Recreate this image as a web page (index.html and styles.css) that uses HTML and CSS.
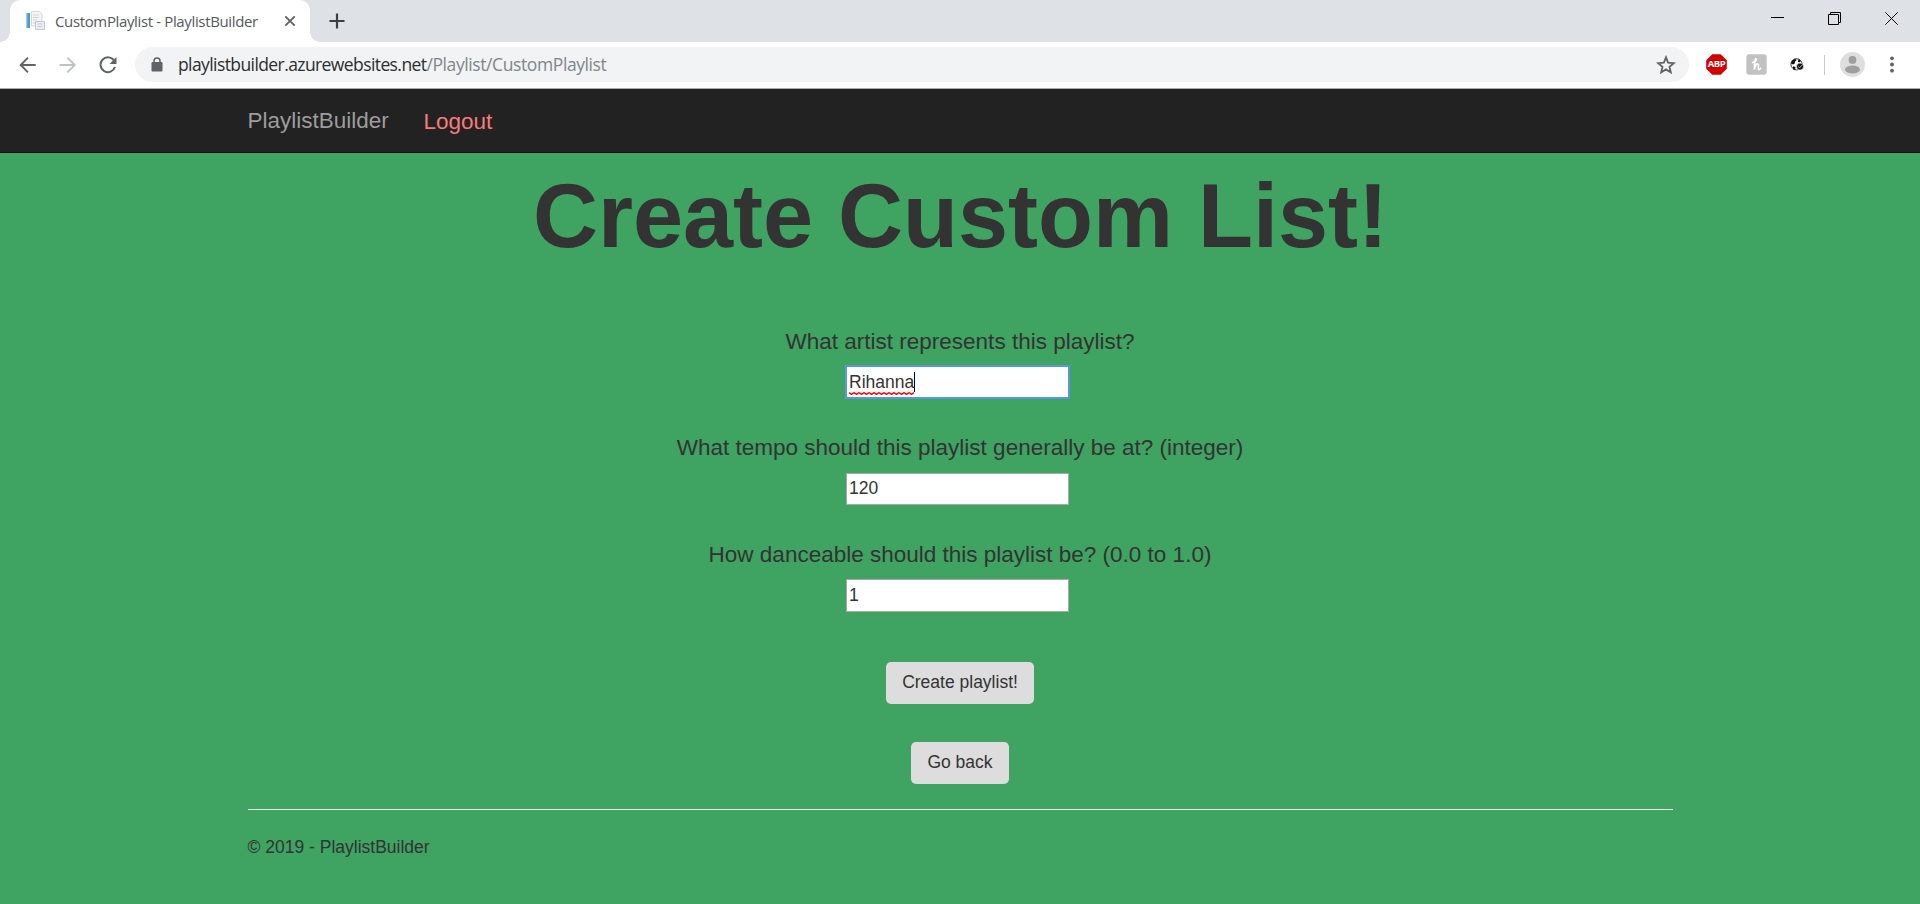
FILE: index.html
```html
<!DOCTYPE html>
<html lang="en">
<head>
<meta charset="utf-8">
<title>CustomPlaylist - PlaylistBuilder</title>
<link rel="stylesheet" href="styles.css">
</head>
<body>
<div class="tabstrip">
  <div class="tab">
    <svg class="favicon" width="20" height="20" viewBox="0 0 20 20"><path d="M1 2h4v15H1z" fill="#4a9bd0"/><path d="M1 2h1.300v15H1z" fill="#9dcbea"/><path d="M6.500.5h8l2.500 2.500v12H6.500z" fill="#f4f5f8" stroke="#d6d8df"/><path d="M8 4h6M8 6.500h6M8 9h4M8 12h3" stroke="#d0d4dc"/><path d="M10.500 10.500h9v8h-9z" fill="#eceef3" stroke="#c3c6d0"/><path d="M12.500 13h5M12.500 15.500h5" stroke="#c3c7d2"/></svg>
    <span class="tabtitle">CustomPlaylist - PlaylistBuilder</span>
    <svg class="tabclose" width="12" height="12" viewBox="0 0 12 12"><path d="M1.300 1.300l9.400 9.400M10.700 1.300l-9.400 9.400" stroke="#5f6368" stroke-width="1.900"/></svg>
  </div>
  <svg class="newtab" width="16" height="16" viewBox="0 0 16 16"><path d="M8 .5v15M.5 8h15" stroke="#3c4043" stroke-width="2.200"/></svg>
  <div class="window">
    <svg width="13" height="13" viewBox="0 0 13 13"><path d="M0 5.500h13" stroke="#000"/></svg>
    <svg width="13" height="13" viewBox="0 0 13 13"><path d="M.5 2.500h10v10H.5zM2.500 2.500v-2h10v10h-2" fill="none" stroke="#000"/></svg>
    <svg width="13" height="13" viewBox="0 0 13 13"><path d="M.3.3l12.400 12.400M12.700.3L.3 12.700" stroke="#000"/></svg>
  </div>
</div>
<div class="toolbar">
  <svg class="back" width="18" height="18" viewBox="0 0 18 18"><path d="M16.700 9H2M9 1.700L1.700 9 9 16.300" fill="none" stroke="#5f6368" stroke-width="1.900"/></svg>
  <svg class="forward" width="18" height="18" viewBox="0 0 18 18"><path d="M.7 9h15M8.400 1.700L15.700 9l-7.300 7.300" fill="none" stroke="#bdc1c6" stroke-width="1.900"/></svg>
  <svg class="reload" width="18" height="18" viewBox="0 0 18 18"><path d="M15 4.500A7.400 7.400 0 1 0 16 11" fill="none" stroke="#5f6368" stroke-width="2"/><path d="M17.500 1v7h-7z" fill="#5f6368"/></svg>
  <div class="omnibox">
    <svg width="12" height="15" viewBox="0 0 12 15"><path d="M3 6V4a3 3 0 0 1 6 0v2" fill="none" stroke="#5f6368" stroke-width="1.500"/><rect x=".5" y="5" width="11" height="9.500" rx="1.200" fill="#5f6368"/></svg>
    <span class="url">playlistbuilder.azurewebsites.net<span class="path">/Playlist/CustomPlaylist</span></span>
    <svg class="star" width="20" height="20" viewBox="0 0 20 20"><path d="M10 2.300l2.100 5.300 5.700.5-4.300 3.700 1.300 5.600L10 14.400l-4.800 3 1.300-5.600-4.300-3.700 5.700-.5z" fill="none" stroke="#5f6368" stroke-width="1.800"/></svg>
  </div>
  <div class="abp">
    <svg width="21" height="21" viewBox="0 0 21 21"><path d="M6.300.2h8.400l6.100 6.100v8.400l-6.100 6.100H6.300L.2 14.700V6.300z" fill="#d00000"/></svg>
    <span class="abptext">ABP</span>
  </div>
  <svg class="honey" width="21" height="21" viewBox="0 0 21 21"><rect x=".3" y=".3" width="20.400" height="20.400" rx="3" fill="#c2c2c2"/><path d="M6.500 8.500C9 8 11 6 10.300 4.900 9.300 4 8.500 7.500 8.300 15.500 8.800 12 10.400 9.500 12 10c1.600.7-.7 4.500.4 5.400.7.500 1.600-.2 2.100-1.200" fill="none" stroke="#fff" stroke-width="1.700" stroke-linecap="round"/></svg>
  <svg class="globe" width="14" height="14" viewBox="0 0 14 14"><circle cx="6.500" cy="6.300" r="5.600" fill="#fff" stroke="#333" stroke-width="1"/><path d="M2 2.500L5.500.8 6.600 2.200 5 3.600 4.800 5.500 3 6.500 1 5.500zM8.500 1L11 2.800l-1.500 1.700-1.700-.7zM3 8.300l2.600.6-.6 3-2-.6z" fill="#111"/><circle cx="10" cy="8.600" r="3.500" fill="#111" stroke="#fff" stroke-width=".6"/><path d="M8.300 8.500l1.300 1.400 2.300-2.700" fill="none" stroke="#bbb"/></svg>
  <span class="divider"></span>
  <svg class="avatar" width="25" height="25" viewBox="0 0 25 25"><circle cx="12.500" cy="12.500" r="12.500" fill="#dedede"/><circle cx="12.500" cy="7.900" r="3.900" fill="#9e9e9e"/><ellipse cx="12.500" cy="17.500" rx="7.500" ry="4" fill="#9e9e9e"/></svg>
  <svg class="menu" width="4" height="17" viewBox="0 0 4 17"><circle cx="2" cy="2.300" r="1.900" fill="#5f6368"/><circle cx="2" cy="8.500" r="1.900" fill="#5f6368"/><circle cx="2" cy="14.700" r="1.900" fill="#5f6368"/></svg>
</div>
<nav class="navbar"><a class="brand">PlaylistBuilder</a><a class="logout">Logout</a></nav>
<main class="container">
  <h1>Create Custom List!</h1>
  <form class="questions">
    <label class="q1">What artist represents this playlist?</label>
    <div class="field artist"><span class="typed">Rihanna<svg class="squiggle" width="65" height="3"><defs><pattern id="wave" width="5" height="3" patternUnits="userSpaceOnUse"><path d="M0 .6L2.500 2.400 5 .6" fill="none" stroke="#f00" stroke-width="1.400"/></pattern></defs><rect width="65" height="3" fill="url(#wave)"/></svg></span><span class="caret"></span></div>
    <label class="q2">What tempo should this playlist generally be at? (integer)</label>
    <div class="field tempo">120</div>
    <label class="q3">How danceable should this playlist be? (0.0 to 1.0)</label>
    <div class="field dance">1</div>
    <button type="button" class="btn create">Create playlist!</button>
    <button type="button" class="btn goback">Go back</button>
  </form>
  <footer>© 2019 - PlaylistBuilder</footer>
</main>
</body>
</html>
```
FILE: styles.css
```css
* { box-sizing: border-box; }
body { margin: 0; height: 904px; overflow: hidden; background: #3fa361; color: #333; font: 17.5px/25px "Liberation Sans", Arial, sans-serif; }
svg { display: block; flex: none; }
.tabstrip { position: relative; display: flex; align-items: flex-start; height: 42px; background: #dee1e6; }
.tab { position: relative; display: flex; align-items: center; width: 300px; height: 42px; margin-left: 10px; padding-left: 15px; background: #fff; border-radius: 10px 10px 0 0; }
.tab::before, .tab::after { content: ""; position: absolute; bottom: 0; width: 10px; height: 10px; }
.tab::before { left: -10px; background: radial-gradient(circle at 0 0, transparent 9.5px, #fff 10px); }
.tab::after { right: -10px; background: radial-gradient(circle at 100% 0, transparent 9.5px, #fff 10px); }
.tabtitle { width: 222px; margin-left: 10px; padding-bottom: 1px; color: #54585c; font: 15px/20px "Open Sans", sans-serif; letter-spacing: -.36px; white-space: nowrap; }
.tabclose { margin-left: 7px; }
.newtab { margin: 13px 0 0 19px; }
.window { display: flex; gap: 44px; margin: 12px 22px 0 auto; }
.toolbar { display: flex; align-items: center; height: 47px; padding: 0 0 1px 19px; background: #fff; border-bottom: 1px solid #ababab; }
.forward { margin-left: 22px; }
.reload { margin-left: 22px; }
.omnibox { display: flex; align-items: center; width: 1554px; height: 35px; margin-left: 18px; padding: 0 13px 0 16px; border-radius: 18px; background: #f1f3f4; }
.url { margin-left: 15px; padding-bottom: 1px; color: #2c2d31; font: 17.5px/24px "Open Sans", sans-serif; letter-spacing: -.59px; white-space: nowrap; }
.path { color: #80868b; letter-spacing: -.4px; }
.star { margin-left: auto; }
.abp { position: relative; flex: none; width: 21px; height: 21px; margin-left: 17px; }
.abptext { position: absolute; left: 0; top: 2px; width: 21px; color: #fff; font: bold 9.5px/16px "Open Sans", sans-serif; letter-spacing: -.4px; text-align: center; }
.honey { margin-left: 19px; }
.globe { margin-left: 23px; }
.divider { width: 1px; height: 20px; margin-left: 20px; background: #c8cacd; }
.avatar { margin-left: 15px; }
.menu { margin-left: 25px; }
.navbar { display: flex; height: 64px; padding: 19px 0 0 247.5px; background: #222; border-bottom: 1px solid #080808; font-size: 22.5px; }
.brand { width: 176px; color: #9d9d9d; }
.logout { padding-top: 1px; color: #f77b7b; }
.container { width: 1425px; margin: 0 auto 0 248px; }
h1 { margin: 13px 0 0; height: 100px; font-size: 90px; line-height: 100px; text-align: center; white-space: nowrap; }
.questions { display: flex; flex-direction: column; align-items: center; height: 544px; padding-top: 63px; border-bottom: 1px solid #eee; }
label { height: 25px; margin-right: 1px; font-size: 22.5px; line-height: 25px; white-space: nowrap; }
.field { position: relative; display: flex; align-items: center; width: 223px; height: 32px; margin: 13px 6px 0 0; padding: 0 2px 2px; background: #fff; border: 1px solid #a9a9a9; }
.artist { margin-top: 12px; padding-bottom: 0; outline: 1px solid #5b94e0; outline-offset: -.5px; border-color: #5b94e0; }
.typed { position: relative; }
.squiggle { position: absolute; left: 0; bottom: 0; }
.caret { width: 1px; height: 20px; background: #000; }
.q2, .q3 { margin-top: 37px; }
.dance { height: 33px; margin-top: 12px; padding-bottom: 1px; }
.btn { height: 42px; margin-right: 1px; padding: 0 15px 2px; border: 0; border-radius: 5px; background: #ddd; color: #333; font: 17.5px/25px "Liberation Sans", Arial, sans-serif; white-space: nowrap; }
.create { width: 148px; margin-top: 50px; }
.goback { width: 98px; margin-top: 38px; }
footer { margin: 25px 0 0 -.5px; }
```
